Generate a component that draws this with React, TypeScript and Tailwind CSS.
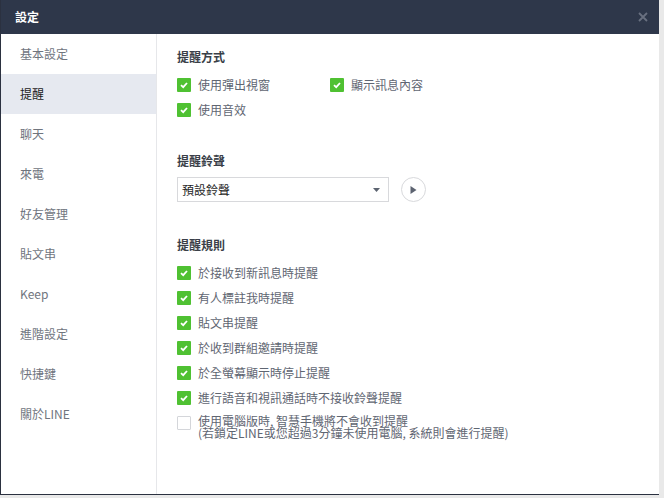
const navItems = ["基本設定", "提醒", "聊天", "來電", "好友管理", "貼文串", "Keep", "進階設定", "快捷鍵", "關於LINE"];

const ruleItems = [
  "於接收到新訊息時提醒",
  "有人標註我時提醒",
  "貼文串提醒",
  "於收到群組邀請時提醒",
  "於全螢幕顯示時停止提醒",
  "進行語音和視訊通話時不接收鈴聲提醒",
];

function CheckBox({ checked = true }: { checked?: boolean }) {
  if (!checked) {
    return <span className="block w-[14px] h-[14px] shrink-0 mt-[1px] bg-white border border-[#d4d6da] rounded-[1px]" />;
  }
  return (
    <span className="flex items-center justify-center w-[14px] h-[14px] shrink-0 bg-[#4fc132] rounded-[1px]">
      <svg width="10" height="10" viewBox="0 0 10 10" fill="none">
        <path d="M2 5.2 L4.2 7.2 L8 3" stroke="white" strokeWidth="1.8" />
      </svg>
    </span>
  );
}

function CheckRow({ label }: { label: string }) {
  return (
    <div className="flex items-center h-[25px] gap-[7px]">
      <CheckBox />
      <span className="text-[12px] text-[#5f6672]">{label}</span>
    </div>
  );
}

export default function App() {
  return (
    <div
      className="w-[664px] h-[498px] bg-[#e9e9e9] overflow-hidden"
      style={{ fontFamily: '"Noto Sans CJK TC", "Liberation Sans", sans-serif' }}
    >
      <div className="w-[659px] h-[495px] flex flex-col bg-white border-l border-b border-[#2b3140]">
        <div className="h-[34px] shrink-0 bg-[#2e374a] flex items-center justify-between pl-[14px] pr-[11px]">
          <span className="text-[12px] font-bold text-white">設定</span>
          <svg width="10" height="10" viewBox="0 0 10 10">
            <path d="M1 1 L9 9 M9 1 L1 9" stroke="#697080" strokeWidth="1.8" />
          </svg>
        </div>
        <div className="flex flex-1 min-h-0">
          <div className="w-[156px] shrink-0 border-r border-[#e6e7ea]">
            {navItems.map((item) => (
              <div
                key={item}
                className={
                  item === "提醒"
                    ? "h-[40px] flex items-center pl-[19px] text-[12px] bg-[#e6e9f0] text-[#1c1c1c]"
                    : "h-[40px] flex items-center pl-[19px] text-[12px] text-[#70757e]"
                }
              >
                {item}
              </div>
            ))}
          </div>
          <div className="flex-1 pl-[20px] pt-[14px]">
            <div className="text-[12px] leading-[18px] font-bold text-[#3a3f48]">提醒方式</div>
            <div className="flex mt-[6px]">
              <div className="w-[153px]">
                <CheckRow label="使用彈出視窗" />
                <CheckRow label="使用音效" />
              </div>
              <CheckRow label="顯示訊息內容" />
            </div>
            <div className="text-[12px] leading-[18px] font-bold text-[#3a3f48] mt-[30px]">提醒鈴聲</div>
            <div className="flex items-center mt-[7px] gap-[12px]">
              <div className="w-[212px] h-[25px] border border-[#d8d9dc] flex items-center justify-between pl-[4px] pr-[8px]">
                <span className="text-[12px] text-[#1f1f1f]">預設鈴聲</span>
                <svg width="7" height="4" viewBox="0 0 7 4">
                  <path d="M0 0 H7 L3.5 4 Z" fill="#5c6370" />
                </svg>
              </div>
              <div className="w-[25px] h-[25px] rounded-full border border-[#d8d9dc] flex items-center justify-center">
                <svg width="7" height="8" viewBox="0 0 7 8">
                  <path d="M0.5 0 L6.5 4 L0.5 8 Z" fill="#5c6370" />
                </svg>
              </div>
            </div>
            <div className="text-[12px] leading-[18px] font-bold text-[#3a3f48] mt-[34px]">提醒規則</div>
            <div className="mt-[6px]">
              {ruleItems.map((item) => (
                <CheckRow key={item} label={item} />
              ))}
            </div>
            <div className="flex items-start gap-[7px] mt-[5px]">
              <CheckBox checked={false} />
              <div className="text-[12px] leading-[12px] text-[#5f6672] whitespace-nowrap">
                使用電腦版時, 智慧手機將不會收到提醒
                <br />
                (若鎖定LINE或您超過3分鐘未使用電腦, 系統則會進行提醒)
              </div>
            </div>
          </div>
        </div>
      </div>
    </div>
  );
}
